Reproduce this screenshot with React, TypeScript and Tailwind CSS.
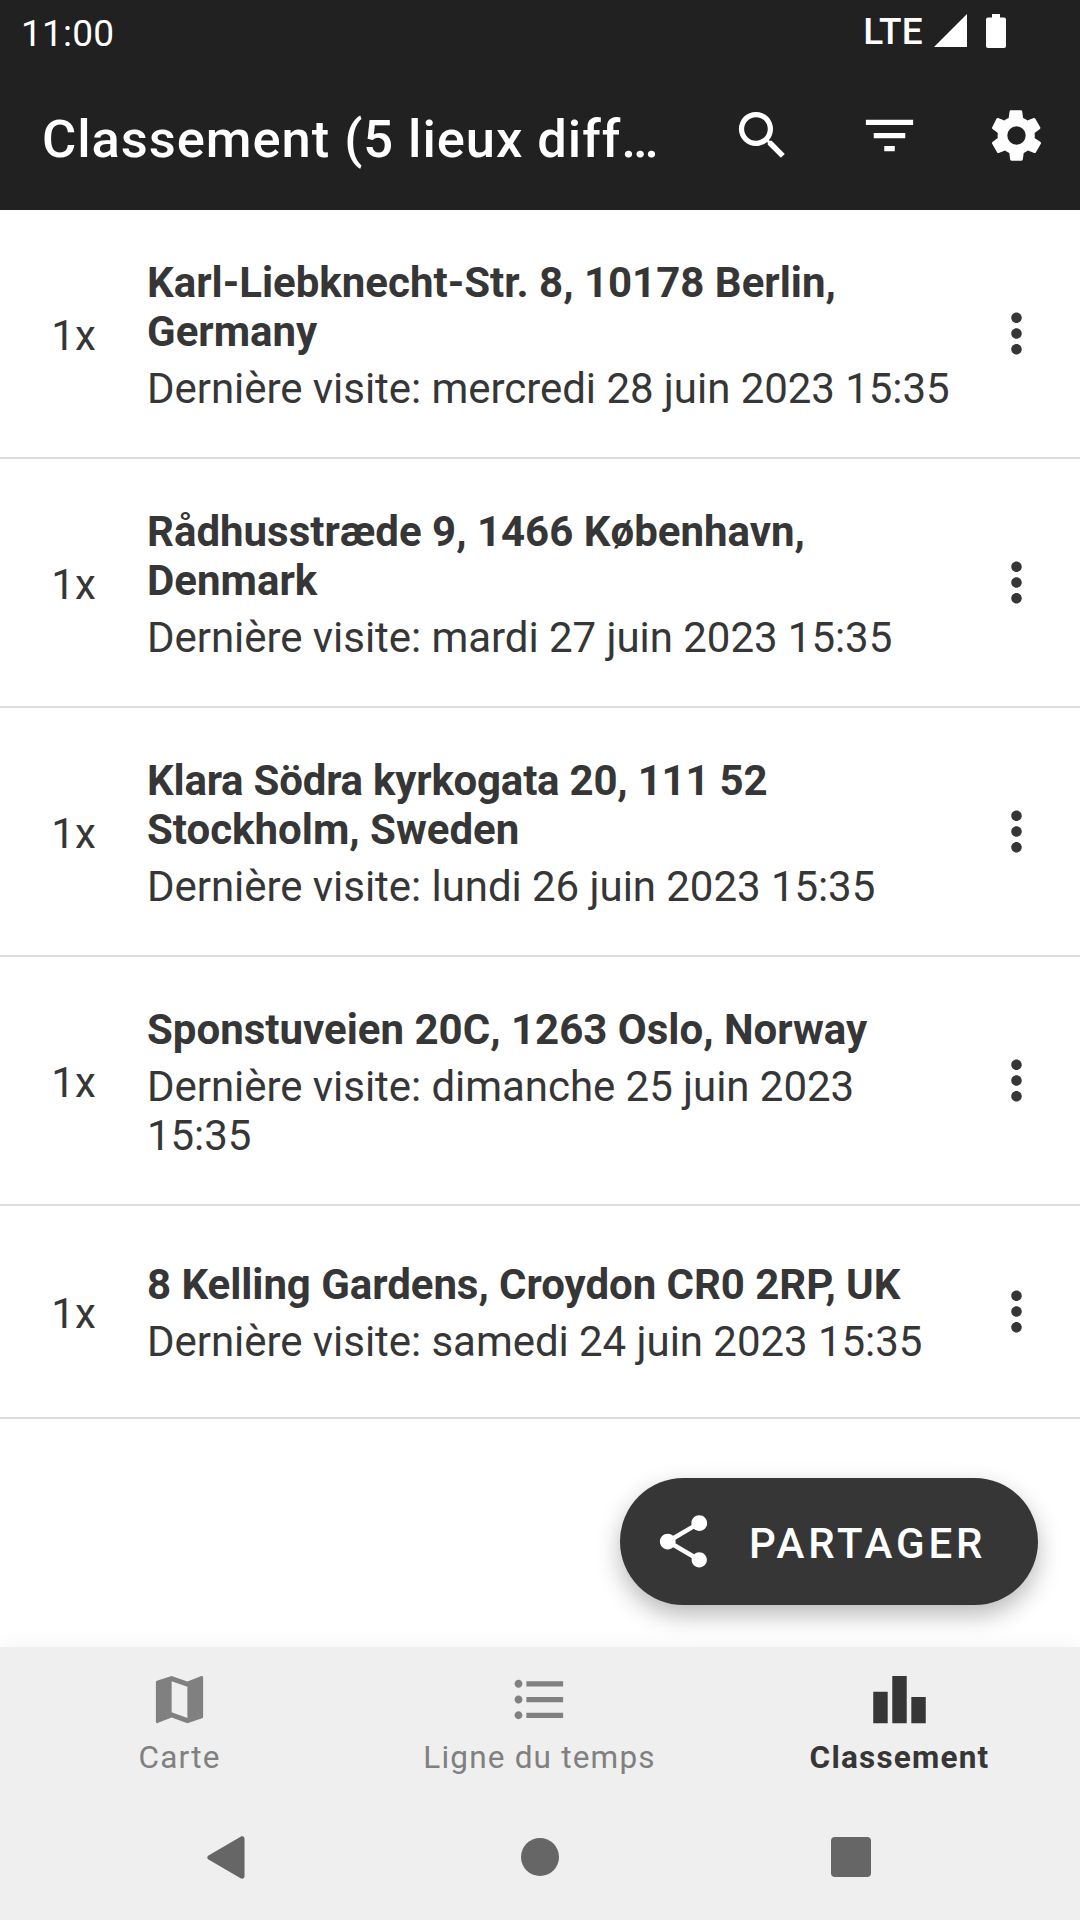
import React, { ReactElement } from 'react';
import {
  MdSearch,
  MdFilterList,
  MdMoreVert,
  MdShare,
  MdMap,
  MdFormatListBulleted,
  MdLeaderboard,
} from 'react-icons/md';
import type { IconType } from 'react-icons';

type Place = {
  count: number;
  address: string;
  lastVisit: string;
  addressClass?: string;
};

type Tab = {
  label: string;
  icon: IconType;
  active?: boolean;
};

const places: Place[] = [
  {
    count: 1,
    address: 'Karl-Liebknecht-Str. 8, 10178 Berlin, Germany',
    lastVisit: 'mercredi 28 juin 2023 15:35',
  },
  {
    count: 1,
    address: 'Rådhusstræde 9, 1466 København, Denmark',
    lastVisit: 'mardi 27 juin 2023 15:35',
  },
  {
    count: 1,
    address: 'Klara Södra kyrkogata 20, 111 52 Stockholm, Sweden',
    lastVisit: 'lundi 26 juin 2023 15:35',
    addressClass: 'first-line:tracking-[-0.22px]',
  },
  {
    count: 1,
    address: 'Sponstuveien 20C, 1263 Oslo, Norway',
    lastVisit: 'dimanche 25 juin 2023 15:35',
  },
  {
    count: 1,
    address: '8 Kelling Gardens, Croydon CR0 2RP, UK',
    lastVisit: 'samedi 24 juin 2023 15:35',
    addressClass: 'tracking-[-0.05px]',
  },
];

const tabs: Tab[] = [
  { label: 'Carte', icon: MdMap },
  { label: 'Ligne du temps', icon: MdFormatListBulleted },
  { label: 'Classement', icon: MdLeaderboard, active: true },
];

const StatusBar = () => (
  <div className="h-[63px] flex flex-row items-start justify-between pl-[21px] pr-[74px]">
    <span className="text-[37px] leading-[44px] mt-[12px] tracking-[0.2px]">
      11:00
    </span>
    <div className="flex flex-row items-start">
      <span className="text-[37px] leading-[44px] mt-[10px] mr-[11px] font-medium tracking-[0.3px]">
        LTE
      </span>
      <svg className="w-[33px] h-[33px] mt-[14px]" viewBox="0 0 33 33">
        <path d="M33 0v33H0z" fill="currentColor" />
      </svg>
      <svg className="w-[20px] h-[34px] mt-[14px] ml-[19px]" viewBox="0 0 20 34">
        <path
          d="M6 0h8v3.500h4a2 2 0 0 1 2 2V32a2 2 0 0 1-2 2H2a2 2 0 0 1-2-2V5.500a2 2 0 0 1 2-2h4z"
          fill="currentColor"
        />
      </svg>
    </div>
  </div>
);

const CogIcon = () => (
  <svg className="w-[63px] h-[63px]" viewBox="0 0 24 24" fill="currentColor">
    <path d="M12 15.500A3.500 3.500 0 0 1 8.500 12 3.500 3.500 0 0 1 12 8.500a3.500 3.500 0 0 1 3.500 3.500 3.500 3.500 0 0 1-3.500 3.500m6.900-2.570c.04-.3.06-.61.06-.93s-.02-.64-.07-.94l2.030-1.580c.18-.14.23-.41.12-.61l-1.920-3.320c-.12-.22-.37-.29-.59-.22l-2.390.96c-.5-.38-1.030-.7-1.620-.94l-.36-2.540c-.04-.24-.24-.41-.48-.41h-3.840c-.24 0-.43.17-.47.41l-.36 2.540c-.59.24-1.130.57-1.620.94l-2.390-.96c-.22-.08-.47 0-.59.22L2.740 8.870c-.12.21-.08.47.12.61l2.030 1.580c-.05.3-.09.63-.09.94s.02.64.07.94l-2.030 1.580c-.18.14-.23.41-.12.61l1.920 3.320c.12.22.37.29.59.22l2.390-.96c.5.38 1.030.7 1.620.94l.36 2.540c.05.24.24.41.48.41h3.840c.24 0 .44-.17.47-.41l.36-2.540c.59-.24 1.130-.56 1.620-.94l2.390.96c.22.08.47 0 .59-.22l1.920-3.320c.12-.22.07-.47-.12-.61z" />
  </svg>
);

const AppBar = () => (
  <div className="h-[147px] flex flex-row items-center pl-[42px] pr-[32px]">
    <h1 className="flex-auto whitespace-nowrap text-[52.5px] leading-[62px] tracking-[0.95px] font-medium mt-[4px]">
      Classement (5 lieux diff…
    </h1>
    <div className="flex flex-row gap-[64px] shrink-0 -mt-[2px]">
      <MdSearch className="w-[63px] h-[63px]" />
      <MdFilterList className="w-[63px] h-[63px]" />
      <CogIcon />
    </div>
  </div>
);

const PlaceRow = ({ place }: { place: Place }) => (
  <li className="group min-h-[213px] pt-[48px] pb-[44px] border-b-2 border-[#dcdcdc] flex flex-row items-center">
    <span className="w-[147px] text-center text-[42px] leading-[49px]">
      {place.count}x
    </span>
    <div className="w-[815px] flex flex-col gap-2 text-[42px] leading-[49px] group-last:-mt-[2px]">
      <span className={`block font-bold ${place.addressClass ?? ''}`}>
        {place.address}
      </span>
      <span className="tracking-[-0.05px]">{`Dernière visite: ${place.lastVisit}`}</span>
    </div>
    <MdMoreVert className="w-[63px] h-[63px] ml-auto mr-[32px] -mt-[4px]" />
  </li>
);

const BottomTabs = () => (
  <nav className="h-[147px] grid grid-cols-3 -ml-px mr-px">
    {tabs.map(({ label, icon: Icon, active }) => (
      <div
        key={label}
        className={`flex flex-col items-center pt-[21px] ${
          active ? 'text-[#363636] font-bold' : 'text-[#808080]'
        }`}
      >
        <Icon className="w-[63px] h-[63px]" />
        <span className="text-[31.5px] leading-[38px] mt-[8px] pl-px tracking-[1.2px]">
          {label}
        </span>
      </div>
    ))}
  </nav>
);

const SystemNav = () => (
  <div className="h-[126px] flex flex-row items-center justify-center text-[#666666] pr-[2px]">
    <svg className="w-[38px] h-[43px]" viewBox="0 0 38 43">
      <path
        d="M33.600.7 1.500 19.500a2.300 2.300 0 0 0 0 4L33.600 42.300c1.800 1 3.900.2 3.900-2V2.700c0-2.200-2.100-3-3.900-2z"
        fill="currentColor"
      />
    </svg>
    <div className="w-[38px] h-[38px] rounded-full bg-[#666666] ml-[276px]" />
    <div className="w-[40px] h-[40px] rounded bg-[#666666] ml-[272px]" />
  </div>
);

export default function App(): ReactElement {
  return (
    <div className="w-[1080px] h-[1920px] flex flex-col bg-white text-[#363636] font-[Roboto,sans-serif] overflow-hidden">
      <header className="bg-[#212121] text-white">
        <StatusBar />
        <AppBar />
      </header>
      <main className="flex-auto relative">
        <ul>
          {places.map((place) => (
            <PlaceRow place={place} key={place.address} />
          ))}
        </ul>
        <button className="absolute right-[42px] bottom-[42px] w-[418px] h-[127px] rounded-full bg-[#363636] text-white flex flex-row items-center pl-[32px] shadow-[0_10px_24px_rgba(0,0,0,0.28)]">
          <MdShare className="w-[63px] h-[63px]" />
          <span className="ml-[34px] mt-[4px] text-[42px] leading-[49px] font-medium tracking-[3.85px]">
            PARTAGER
          </span>
        </button>
      </main>
      <footer className="bg-[#efefef] relative shadow-[0_0_20px_rgba(0,0,0,0.06)]">
        <BottomTabs />
        <SystemNav />
      </footer>
    </div>
  );
}
